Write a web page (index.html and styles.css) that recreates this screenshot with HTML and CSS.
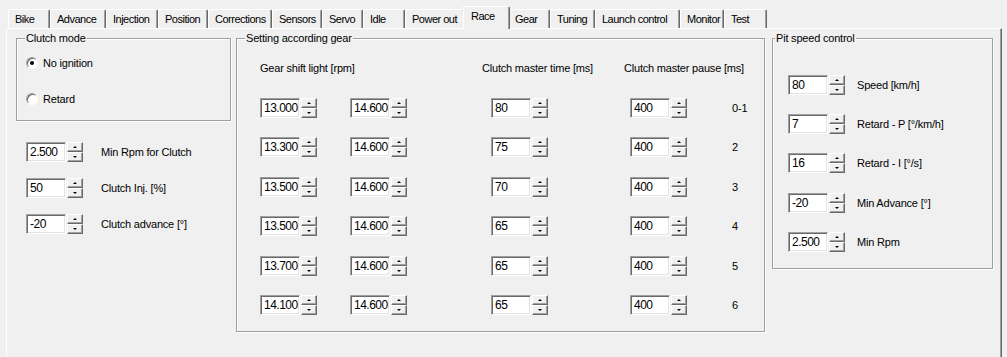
FILE: index.html
```html
<!DOCTYPE html>
<html lang="en">
<head>
    <meta charset="UTF-8">
    <title>Race settings</title>
    <link rel="stylesheet" href="styles.css">
</head>
<body>
    <div class="tabs">
        <div class="tab">Bike</div>
        <div class="tab">Advance</div>
        <div class="tab">Injection</div>
        <div class="tab">Position</div>
        <div class="tab">Corrections</div>
        <div class="tab">Sensors</div>
        <div class="tab">Servo</div>
        <div class="tab">Idle</div>
        <div class="tab">Power out</div>
        <div class="tab active">Race</div>
        <div class="tab">Gear</div>
        <div class="tab">Tuning</div>
        <div class="tab">Launch control</div>
        <div class="tab">Monitor</div>
        <div class="tab">Test</div>
    </div>

    <div class="panel">
        <div class="left-col">
            <div class="group clutch-mode">
                <span class="group-title">Clutch mode</span>
                <label class="radio-row"><span class="radio checked"></span>No ignition</label>
                <label class="radio-row"><span class="radio"></span>Retard</label>
            </div>

            <div class="field-list left-fields">
                <div class="field"><span class="spin"><span class="spin-value">2.500</span><span class="spin-buttons"><span class="up"></span><span class="down"></span></span></span><span class="field-label">Min Rpm for Clutch</span></div>
                <div class="field"><span class="spin"><span class="spin-value">50</span><span class="spin-buttons"><span class="up"></span><span class="down"></span></span></span><span class="field-label">Clutch Inj. [%]</span></div>
                <div class="field"><span class="spin"><span class="spin-value">-20</span><span class="spin-buttons"><span class="up"></span><span class="down"></span></span></span><span class="field-label">Clutch advance [°]</span></div>
            </div>
        </div>

        <div class="group gear-group">
            <span class="group-title">Setting according gear</span>
            <div class="gear-head">
                <span>Gear shift light [rpm]</span>
                <span></span>
                <span class="head-time">Clutch master time [ms]</span>
                <span class="head-pause">Clutch master pause [ms]</span>
            </div>
            <div class="gear-grid" id="gear-grid"></div>
        </div>

        <div class="group pit-group">
            <span class="group-title">Pit speed control</span>
            <div class="field-list pit-fields">
                <div class="field"><span class="spin"><span class="spin-value">80</span><span class="spin-buttons"><span class="up"></span><span class="down"></span></span></span><span class="field-label">Speed [km/h]</span></div>
                <div class="field"><span class="spin"><span class="spin-value">7</span><span class="spin-buttons"><span class="up"></span><span class="down"></span></span></span><span class="field-label">Retard - P [°/km/h]</span></div>
                <div class="field"><span class="spin"><span class="spin-value">16</span><span class="spin-buttons"><span class="up"></span><span class="down"></span></span></span><span class="field-label">Retard - I [°/s]</span></div>
                <div class="field"><span class="spin"><span class="spin-value">-20</span><span class="spin-buttons"><span class="up"></span><span class="down"></span></span></span><span class="field-label">Min Advance [°]</span></div>
                <div class="field"><span class="spin"><span class="spin-value">2.500</span><span class="spin-buttons"><span class="up"></span><span class="down"></span></span></span><span class="field-label">Min Rpm</span></div>
            </div>
        </div>
    </div>

    <script>
        // gear table: shift light low/high, clutch time, clutch pause, gear
        const gears = [
            ['13.000', '14.600', '80', '400', '0-1'],
            ['13.300', '14.600', '75', '400', '2'],
            ['13.500', '14.600', '70', '400', '3'],
            ['13.500', '14.600', '65', '400', '4'],
            ['13.700', '14.600', '65', '400', '5'],
            ['14.100', '14.600', '65', '400', '6']
        ];

        const spin = (value) =>
            '<span class="spin"><span class="spin-value">' + value + '</span>' +
            '<span class="spin-buttons"><span class="up"></span><span class="down"></span></span></span>';

        const grid = document.getElementById('gear-grid');
        gears.forEach((row) => {
            grid.innerHTML += spin(row[0]) + spin(row[1]) + spin(row[2]) + spin(row[3]) +
                '<span class="gear-no">' + row[4] + '</span>';
        });
    </script>
</body>
</html>
```

FILE: styles.css
```css
body {
    margin: 0;
    background-color: #f0f0f0;
    font-family: "Liberation Sans", Arial, sans-serif;
    font-size: 11px;
    letter-spacing: -0.2px;
    color: #000;
    overflow: hidden;
}
.tabs {
    display: grid;
    grid-template-columns: 42px 56px 52px 50px 64px 50px 41px 42px 60px 43px 42px 45px 85px 44px 43px;
    grid-template-rows: 19px;
    margin: 9px 0 0 8px;
    letter-spacing: -0.5px;
}
.tab {
    box-sizing: border-box;
    padding: 1px 0 0 6px;
    line-height: 16px;
    border-top: 1px solid #fff;
    border-left: 1px solid #fff;
    border-right: 1px solid #696969;
    border-radius: 2px 2px 0 0;
    box-shadow: inset -1px 0 0 #a0a0a0;
    white-space: nowrap;
}
.tab.active {
    position: relative;
    z-index: 1;
    margin: -3px -2px -1px;
    padding: 0 0 0 7px;
    line-height: 18px;
    background-color: #f0f0f0;
}
.panel {
    box-sizing: border-box;
    display: flex;
    align-items: flex-start;
    width: 996px;
    height: 340px;
    margin-left: 6px;
    padding: 9px 0 0 9px;
    border-top: 1px solid #fff;
    border-left: 1px solid #fff;
    border-right: 1px solid #696969;
    box-shadow: inset -1px 0 0 #a0a0a0;
}
.group {
    position: relative;
    box-sizing: border-box;
    border: 1px solid #a0a0a0;
    box-shadow: inset 1px 1px 0 #fff, 1px 1px 0 #fff;
}
.group-title {
    position: absolute;
    top: -7px;
    left: 8px;
    padding: 0 1px;
    line-height: 13px;
    background-color: #f0f0f0;
}
.left-col {
    width: 215px;
}
.clutch-mode {
    display: flex;
    flex-direction: column;
    gap: 22px;
    height: 83px;
    padding: 17px 0 0 9px;
}
.radio-row {
    display: flex;
    align-items: center;
    height: 14px;
}
.radio {
    box-sizing: border-box;
    display: inline-flex;
    align-items: center;
    justify-content: center;
    width: 12px;
    height: 12px;
    margin-right: 5px;
    border: 1px solid;
    border-color: #a0a0a0 #fff #fff #a0a0a0;
    border-radius: 50%;
    background-color: #fff;
    box-shadow: inset 1px 1px 0 #696969;
}
.radio.checked::after {
    content: "";
    width: 4px;
    height: 4px;
    border-radius: 50%;
    background-color: #000;
}
.field-list {
    display: flex;
    flex-direction: column;
}
.field {
    display: flex;
    align-items: center;
}
.left-fields {
    gap: 16px;
    margin-top: 21px;
    padding-left: 10px;
}
.left-fields .field-label {
    margin-left: 18px;
}
.spin {
    display: inline-flex;
    gap: 1px;
    height: 20px;
}
.spin-value {
    box-sizing: border-box;
    width: 40px;
    height: 20px;
    padding: 1px 0 0 3px;
    font-size: 12px;
    letter-spacing: -0.5px;
    line-height: 17px;
    background-color: #fff;
    border: 1px solid;
    border-color: #a0a0a0 #fff #fff #a0a0a0;
    box-shadow: inset 1px 1px 0 #696969, inset -1px -1px 0 #e3e3e3;
}
.spin-buttons {
    display: flex;
    flex-direction: column;
    width: 16px;
}
.spin-buttons span {
    box-sizing: border-box;
    display: flex;
    align-items: center;
    justify-content: center;
    height: 10px;
    border: 1px solid;
    border-color: #fff #696969 #696969 #fff;
    box-shadow: inset -1px -1px 0 #a0a0a0;
    background-color: #f0f0f0;
}
.spin-buttons .up::after,
.spin-buttons .down::after {
    content: "";
    border-left: 2px solid transparent;
    border-right: 2px solid transparent;
}
.spin-buttons .up::after {
    border-bottom: 2px solid #000;
}
.spin-buttons .down::after {
    border-top: 2px solid #000;
}
.gear-group {
    width: 529px;
    height: 294px;
    margin-left: 5px;
    padding: 23px 0 0 23px;
}
.gear-head,
.gear-grid {
    display: grid;
    grid-template-columns: 90px 141px 139px 101px auto;
    align-items: center;
}
.gear-head {
    line-height: 13px;
    height: 13px;
    margin-bottom: 23px;
}
.gear-head span {
    white-space: nowrap;
}
.head-time {
    margin-left: -9px;
}
.head-pause {
    margin-left: -6px;
}
.gear-grid {
    row-gap: 19.4px;
}
.gear-no {
    padding-left: 1px;
}
.pit-group {
    width: 221px;
    height: 231px;
    margin-left: 7px;
    padding: 36px 0 0 15px;
}
.pit-group .group-title {
    left: 2px;
}
.pit-fields {
    gap: 19.2px;
}
.pit-fields .field-label {
    margin-left: 12px;
}
```
